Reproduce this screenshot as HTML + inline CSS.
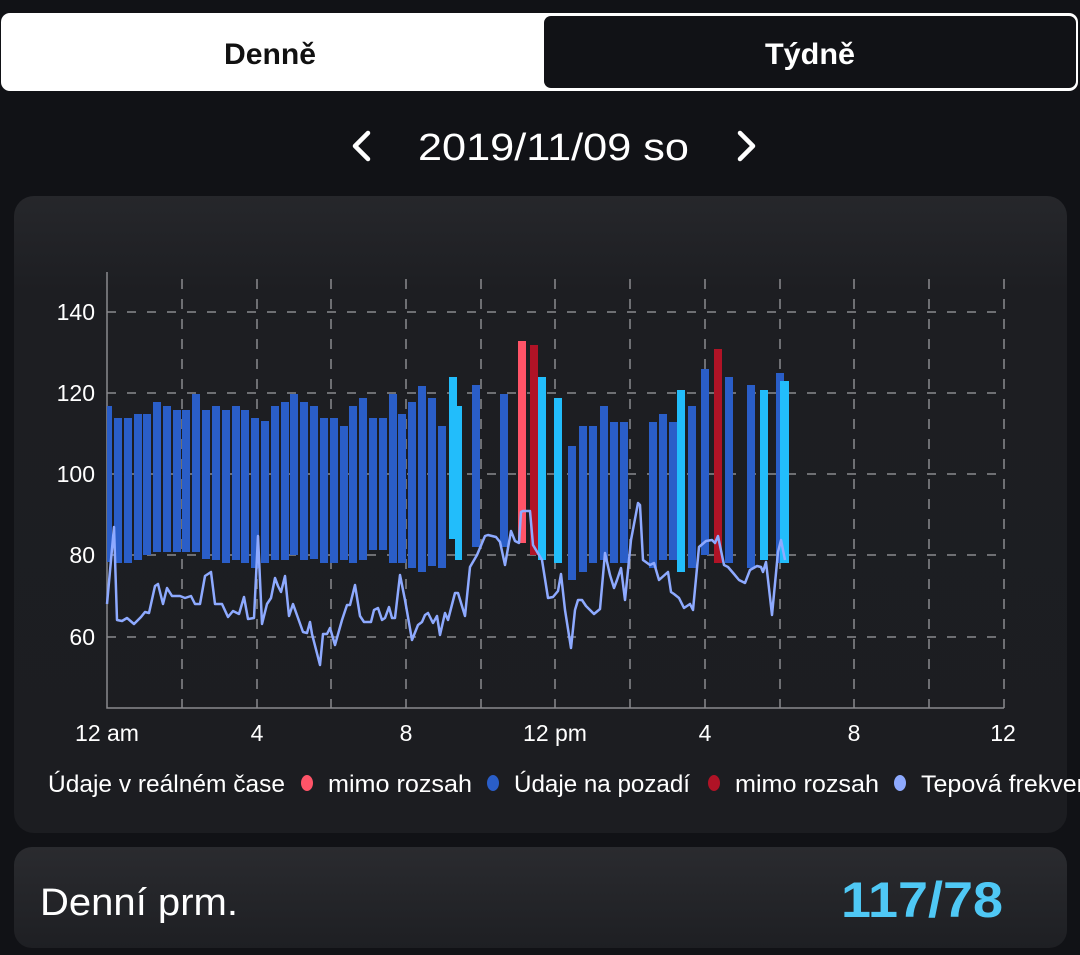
<!DOCTYPE html>
<html><head><meta charset="utf-8"><style>
html,body{margin:0;padding:0;background:#111216;width:1080px;height:955px;overflow:hidden}
svg{display:block}
text{font-family:"Liberation Sans",sans-serif}
</style></head><body>
<svg width="1080" height="955" viewBox="0 0 1080 955" xmlns="http://www.w3.org/2000/svg">
<defs>
<linearGradient id="cg" x1="0" y1="0" x2="0" y2="1"><stop offset="0" stop-color="#26272b"/><stop offset="0.15" stop-color="#1d1e22"/><stop offset="1" stop-color="#1c1d21"/></linearGradient>
<linearGradient id="cg2" x1="0" y1="0" x2="0" y2="1"><stop offset="0" stop-color="#2a2b2f"/><stop offset="1" stop-color="#1e1f23"/></linearGradient>
</defs>
<rect width="1080" height="955" fill="#111216"/>
<!-- tabs -->
<rect x="1" y="13" width="1077" height="78" rx="9" fill="#fff"/>
<rect x="544" y="16" width="532" height="72" rx="7" fill="#111216"/>
<text x="270" y="64" text-anchor="middle" font-size="30" font-weight="bold" fill="#111" textLength="92" lengthAdjust="spacingAndGlyphs">Denně</text>
<text x="810" y="64" text-anchor="middle" font-size="30" font-weight="bold" fill="#fff" textLength="90" lengthAdjust="spacingAndGlyphs">Týdně</text>
<!-- date -->
<path d="M368 133 L355 146 L368 159" stroke="#fff" stroke-width="4.5" fill="none" stroke-linecap="round" stroke-linejoin="round"/>
<path d="M740 133 L753 146 L740 159" stroke="#fff" stroke-width="4.5" fill="none" stroke-linecap="round" stroke-linejoin="round"/>
<text x="418" y="160" font-size="38" fill="#fff" textLength="271" lengthAdjust="spacingAndGlyphs">2019/11/09 so</text>
<!-- chart card -->
<rect x="14" y="196" width="1053" height="637" rx="20" fill="url(#cg)"/>
<!-- grid -->
<g stroke="#8a8a8e" stroke-width="1.5" stroke-dasharray="9 11">
<line x1="107" y1="312" x2="1004" y2="312"/>
<line x1="107" y1="393" x2="1004" y2="393"/>
<line x1="107" y1="474" x2="1004" y2="474"/>
<line x1="107" y1="555" x2="1004" y2="555"/>
<line x1="107" y1="637" x2="1004" y2="637"/>
</g>
<g stroke="#8a8a8e" stroke-width="1.5" stroke-dasharray="10 10">
<line x1="182" y1="279" x2="182" y2="708"/><line x1="257" y1="279" x2="257" y2="708"/>
<line x1="331" y1="279" x2="331" y2="708"/><line x1="406" y1="279" x2="406" y2="708"/>
<line x1="481" y1="279" x2="481" y2="708"/><line x1="555" y1="279" x2="555" y2="708"/>
<line x1="630" y1="279" x2="630" y2="708"/><line x1="705" y1="279" x2="705" y2="708"/>
<line x1="780" y1="279" x2="780" y2="708"/><line x1="854" y1="279" x2="854" y2="708"/>
<line x1="929" y1="279" x2="929" y2="708"/><line x1="1004" y1="279" x2="1004" y2="708"/>
</g>
<path d="M107 272 V708 H1004" stroke="#8a8a8e" stroke-width="1.5" fill="none"/>
<g font-size="23" fill="#fff" text-anchor="end">
<text x="95" y="320">140</text><text x="95" y="401">120</text><text x="95" y="482">100</text><text x="95" y="563">80</text><text x="95" y="645">60</text>
</g>
<g font-size="23" fill="#fff" text-anchor="middle">
<text x="107" y="741">12 am</text><text x="257" y="741">4</text><text x="406" y="741">8</text><text x="555" y="741">12 pm</text><text x="705" y="741">4</text><text x="854" y="741">8</text><text x="1003" y="741">12</text>
</g>
<!-- bars -->
<g fill="#2a5ec8">
<rect x="107" y="406" width="5" height="156"/>
<rect x="114" y="418" width="8" height="145"/><rect x="124" y="418" width="8" height="145"/>
<rect x="134" y="414" width="8" height="146"/><rect x="143" y="414" width="8" height="141"/>
<rect x="153" y="402" width="8" height="150"/><rect x="163" y="406" width="8" height="146"/>
<rect x="173" y="410" width="8" height="142"/><rect x="182" y="410" width="8" height="142"/>
<rect x="192" y="394" width="8" height="158"/><rect x="202" y="410" width="8" height="149"/>
<rect x="212" y="406" width="8" height="154"/><rect x="222" y="410" width="8" height="153"/>
<rect x="232" y="406" width="8" height="154"/><rect x="241" y="410" width="8" height="153"/>
<rect x="251" y="418" width="8" height="150"/><rect x="261" y="421" width="8" height="142"/>
<rect x="271" y="406" width="8" height="154"/><rect x="281" y="402" width="8" height="158"/>
<rect x="290" y="394" width="8" height="161"/><rect x="300" y="402" width="8" height="158"/>
<rect x="310" y="406" width="8" height="153"/><rect x="320" y="418" width="8" height="145"/>
<rect x="330" y="418" width="8" height="145"/><rect x="340" y="426" width="8" height="134"/>
<rect x="349" y="406" width="8" height="157"/><rect x="359" y="398" width="8" height="162"/>
<rect x="369" y="418" width="8" height="132"/><rect x="379" y="418" width="8" height="132"/>
<rect x="389" y="394" width="8" height="169"/><rect x="398" y="414" width="8" height="149"/>
<rect x="408" y="402" width="8" height="166"/><rect x="418" y="386" width="8" height="186"/>
<rect x="428" y="398" width="8" height="168"/><rect x="438" y="426" width="8" height="142"/>
<rect x="472" y="385" width="8" height="162"/><rect x="500" y="394" width="8" height="153"/>
<rect x="568" y="446" width="8" height="134"/><rect x="579" y="426" width="8" height="146"/>
<rect x="589" y="426" width="8" height="137"/><rect x="600" y="406" width="8" height="154"/>
<rect x="610" y="422" width="8" height="141"/><rect x="620" y="422" width="8" height="141"/>
<rect x="649" y="422" width="8" height="146"/><rect x="659" y="414" width="8" height="146"/>
<rect x="669" y="422" width="8" height="138"/><rect x="688" y="406" width="8" height="162"/>
<rect x="701" y="369" width="8" height="186"/><rect x="725" y="377" width="8" height="186"/>
<rect x="747" y="385" width="8" height="183"/><rect x="776" y="373" width="8" height="190"/>
</g>
<g fill="#22bdfb">
<rect x="449" y="377" width="8" height="162"/><rect x="455" y="406" width="7" height="154"/>
<rect x="538" y="377" width="8" height="183"/><rect x="554" y="398" width="8" height="165"/>
<rect x="677" y="390" width="8" height="182"/><rect x="760" y="390" width="8" height="170"/>
<rect x="780" y="381" width="9" height="182"/>
</g>
<rect x="518" y="341" width="8" height="202" fill="#ff5468"/>
<rect x="530" y="345" width="8" height="210" fill="#b01326"/>
<rect x="714" y="349" width="8" height="214" fill="#b01326"/>
<!-- heart rate line -->
<polyline fill="none" stroke="#8eaaff" stroke-width="2.5" stroke-linejoin="round" points="107,604 114,527 117,620 122,621 127,618 134,624 141,617 145,612 149,613 155,586 158,584 163,604 167,588 172,596 180,596 185,598 191,596 195,604 200,604 205,576 211,572 215,604 222,604 228,617 233,611 239,614 244,597 248,619 254,618 258,536 262,624 267,604 271,598 275,578 278,586 281,592 285,576 289,616 293,604 298,618 303,632 307,633 310,622 312,634 320,665 323,634 327,634 330,628 335,645 342,620 347,605 350,605 355,585 360,616 364,622 371,622 374,610 378,608 382,620 385,618 389,607 392,618 395,618 400,575 405,600 412,640 418,625 422,622 425,615 428,613 433,623 437,616 440,635 445,613 448,620 455,593 458,593 465,616 470,567 477,555 485,536 488,535 496,537 500,542 505,565 511,531 515,541 519,543 521,512 523,511 530,511 533,545 542,560 548,598 553,597 558,591 561,574 565,610 571,648 575,610 578,600 582,600 586,606 594,614 600,609 605,553 610,575 614,588 617,580 621,568 625,600 631,540 638,503 640,505 643,560 650,565 654,563 659,580 668,572 671,592 674,594 679,598 684,608 690,604 693,610 699,547 706,541 712,540 715,543 718,536 724,565 728,567 734,574 739,580 745,583 750,570 757,566 761,567 763,572 766,562 772,615 778,552 781,540 785,560"/>
<!-- legend -->
<g font-size="24" fill="#fff">
<text x="48" y="792" textLength="237" lengthAdjust="spacingAndGlyphs">Údaje v reálném čase</text>
<text x="328" y="792" textLength="144" lengthAdjust="spacingAndGlyphs">mimo rozsah</text>
<text x="514" y="792" textLength="176" lengthAdjust="spacingAndGlyphs">Údaje na pozadí</text>
<text x="735" y="792" textLength="144" lengthAdjust="spacingAndGlyphs">mimo rozsah</text>
<text x="921" y="792" textLength="196" lengthAdjust="spacingAndGlyphs">Tepová frekvence</text>
</g>
<ellipse cx="307" cy="783" rx="6" ry="8" fill="#ff5468"/>
<ellipse cx="493" cy="783" rx="6" ry="8" fill="#2a5ec8"/>
<ellipse cx="714" cy="783" rx="6" ry="8" fill="#b01326"/>
<ellipse cx="900" cy="783" rx="6" ry="8" fill="#8eaaff"/>
<!-- bottom card -->
<rect x="14" y="847" width="1053" height="101" rx="18" fill="url(#cg2)"/>
<text x="40" y="915" font-size="38" fill="#fff" textLength="198" lengthAdjust="spacingAndGlyphs">Denní prm.</text>
<text x="1003" y="917" font-size="50" font-weight="bold" fill="#4fc8f5" text-anchor="end" textLength="162" lengthAdjust="spacingAndGlyphs">117/78</text>
</svg>
</body></html>
